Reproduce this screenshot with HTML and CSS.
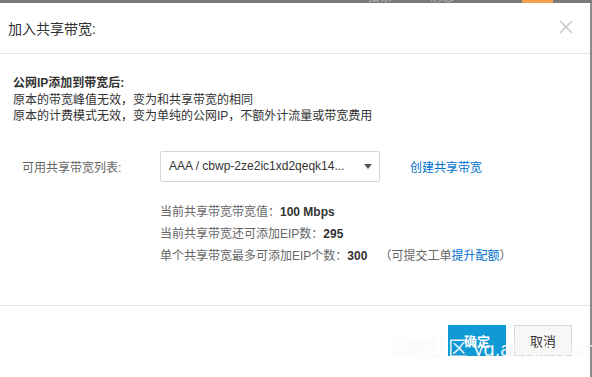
FILE: index.html
```html
<!DOCTYPE html>
<html lang="zh">
<head>
<meta charset="utf-8">
<link rel="stylesheet" href="styles.css">
</head>
<body>
<div class="topbar">
  <span class="tb-item tb-search">搜索</span>
  <span class="tb-item tb-msg">消息</span>
  <span class="tb-badge"></span>
</div>
<div class="page">
  <div class="dialog">
    <div class="header">
      <div class="title">加入共享带宽:</div>
      <svg class="close" width="14" height="14" viewBox="0 0 14 14"><path d="M1 1L13 13M13 1L1 13" stroke="#c8c8c8" stroke-width="1.6" fill="none"/></svg>
    </div>
    <div class="body">
      <div class="notice">
        <div class="notice-title">公网IP添加到带宽后:</div>
        <div>原本的带宽峰值无效，变为和共享带宽的相同</div>
        <div>原本的计费模式无效，变为单纯的公网IP，不额外计流量或带宽费用</div>
      </div>
      <div class="form-row">
        <div class="label">可用共享带宽列表:</div>
        <div class="select">
          <span class="select-text">AAA / cbwp-2ze2ic1xd2qeqk14...</span>
          <span class="caret"></span>
        </div>
        <a class="link create">创建共享带宽</a>
      </div>
      <div class="info">
        <div>当前共享带宽带宽值：<b>100 Mbps</b></div>
        <div>当前共享带宽还可添加EIP数：<b>295</b></div>
        <div>单个共享带宽最多可添加EIP个数：<b>300</b><span class="hint">（可提交工单<a class="link">提升配额</a>）</span></div>
      </div>
    </div>
    <div class="footer">
      <button class="btn btn-primary">确定</button>
      <button class="btn btn-default">取消</button>
      <div class="watermark">云栖社区 yq.aliyun.com</div>
    </div>
  </div>
  <div class="side"></div>
</div>
</body>
</html>
```

FILE: styles.css
```css
* { box-sizing: border-box; }
html, body {
  margin: 0;
  padding: 0;
  width: 592px;
  height: 377px;
  overflow: hidden;
  background: #fff;
  font-family: "Liberation Sans", "Noto Sans CJK SC", sans-serif;
  color: #333;
}
.topbar {
  height: 3px;
  background: #7a7a7a;
  position: relative;
  overflow: hidden;
}
.tb-item {
  position: absolute;
  top: -9px;
  font-size: 12px;
  color: #bbb;
  line-height: 12px;
}
.tb-search { left: 368px; }
.tb-msg { left: 430px; }
.tb-badge {
  position: absolute;
  left: 522px;
  top: 0;
  width: 31px;
  height: 3px;
  background: #f0a050;
}
.page {
  display: flex;
  height: 374px;
}
.dialog {
  width: 590px;
  display: flex;
  flex-direction: column;
  background: #fff;
  position: relative;
}
.side {
  flex: 1;
  background: #8a8a8a;
}
.header {
  height: 51px;
  border-bottom: 1px solid #e5e5e5;
  display: flex;
  align-items: center;
  justify-content: space-between;
  padding: 0 17px 0 8px;
}
.title {
  font-size: 14px;
  color: #333;
  margin-top: -1px;
}
.close { margin-top: -3px; }
.body {
  height: 252px;
  border-bottom: 1px solid #e5e5e5;
  padding: 21px 0 0 13px;
  font-size: 12px;
}
.notice { line-height: 16.5px; color: #333; }
.notice-title { font-weight: bold; }
.form-row {
  display: flex;
  align-items: center;
  margin-top: 26px;
}
.label {
  width: 147px;
  padding-left: 9px;
  color: #666;
}
.select {
  width: 220px;
  height: 31px;
  border: 1px solid #d6d6d6;
  border-radius: 2px;
  display: flex;
  align-items: center;
  justify-content: space-between;
  padding: 0 7px 0 8px;
  font-size: 12px;
  color: #333;
}
.caret {
  width: 0;
  height: 0;
  border-left: 4px solid transparent;
  border-right: 4px solid transparent;
  border-top: 5px solid #555;
}
.link { color: #0070cc; text-decoration: none; }
.create { margin-left: 30px; }
.info {
  margin-top: 19px;
  padding-left: 147px;
  line-height: 22px;
  color: #666;
}
.info b { color: #333; }
.hint { margin-left: 12px; }
.footer {
  flex: 1;
  display: flex;
  justify-content: flex-end;
  align-items: flex-start;
  gap: 8px;
  padding: 19px 18px 0 0;
  position: relative;
}
.btn {
  width: 58px;
  height: 31px;
  font-family: "Liberation Sans", "Noto Sans CJK SC", sans-serif;
  font-size: 13px;
  border-radius: 0;
  padding: 0;
}
.btn-primary {
  background: #0f9ad6;
  border: 1px solid #0f9ad6;
  color: #fff;
  font-weight: bold;
}
.btn-default {
  background: #f7f7f7;
  border: 1px solid #d8d8d8;
  color: #333;
}
.watermark {
  position: absolute;
  left: 388px;
  top: 31px;
  font-size: 20px;
  line-height: 24px;
  color: rgba(255,255,255,0.92);
  text-shadow: 0 0 1px rgba(0,0,0,0.09);
  white-space: nowrap;
  pointer-events: none;
}
```
